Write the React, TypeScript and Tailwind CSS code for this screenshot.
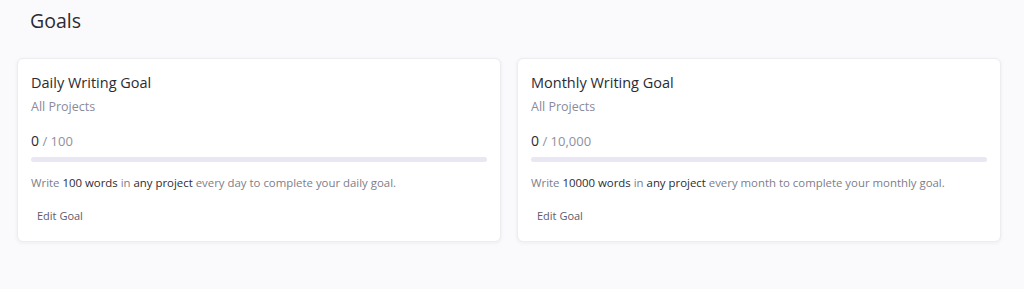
const goals = [
  {
    title: "Daily Writing Goal",
    target: "100",
    words: "100",
    period: "day",
    kind: "daily",
  },
  {
    title: "Monthly Writing Goal",
    target: "10,000",
    words: "10000",
    period: "month",
    kind: "monthly",
  },
];

function GoalCard({ goal }: { goal: (typeof goals)[number] }) {
  return (
    <div className="flex-1 rounded-md border border-[#ececf1] bg-white px-[13px] pt-[13px] pb-[13px] shadow-[0_1px_4px_rgba(30,30,60,0.06)]">
      <h3 className="text-[14.5px] leading-[22px] text-[#2b2b33]">{goal.title}</h3>
      <div className="mt-[3px] text-[12.5px] leading-[20px] text-[#8a8a9c]">All Projects</div>
      <div className="mt-[14px] text-[13px] leading-[20px] text-[#9090a0]">
        <span className="text-[14px] text-[#2b2b33]">0</span> / {goal.target}
      </div>
      <div className="mt-[6px] h-[5px] w-full rounded-full bg-[#e9e7f4]" />
      <p className="mt-[12px] text-[11.4px] leading-[18px] text-[#7d7d8a]">
        Write <span className="text-[#2b2b33]">{goal.words} words</span> in{" "}
        <span className="text-[#2b2b33]">any project</span> every {goal.period} to complete your{" "}
        {goal.kind} goal.
      </p>
      <button className="mt-[12px] rounded px-[6px] py-[3px] text-[11px] leading-[18px] text-[#5b5b6b]">
        Edit Goal
      </button>
    </div>
  );
}

export default function App() {
  return (
    <div
      className="min-h-[289px] w-full bg-[#fafafc] px-[17px] pt-[8px]"
      style={{ fontFamily: '"Open Sans", "Noto Sans", sans-serif' }}
    >
      <h2 className="pl-[13px] text-[19.5px] leading-[26px] text-[#2b2b33]">Goals</h2>
      <div className="mt-[24px] flex gap-[16px] pr-[6px]">
        {goals.map((g) => (
          <GoalCard key={g.kind} goal={g} />
        ))}
      </div>
    </div>
  );
}
